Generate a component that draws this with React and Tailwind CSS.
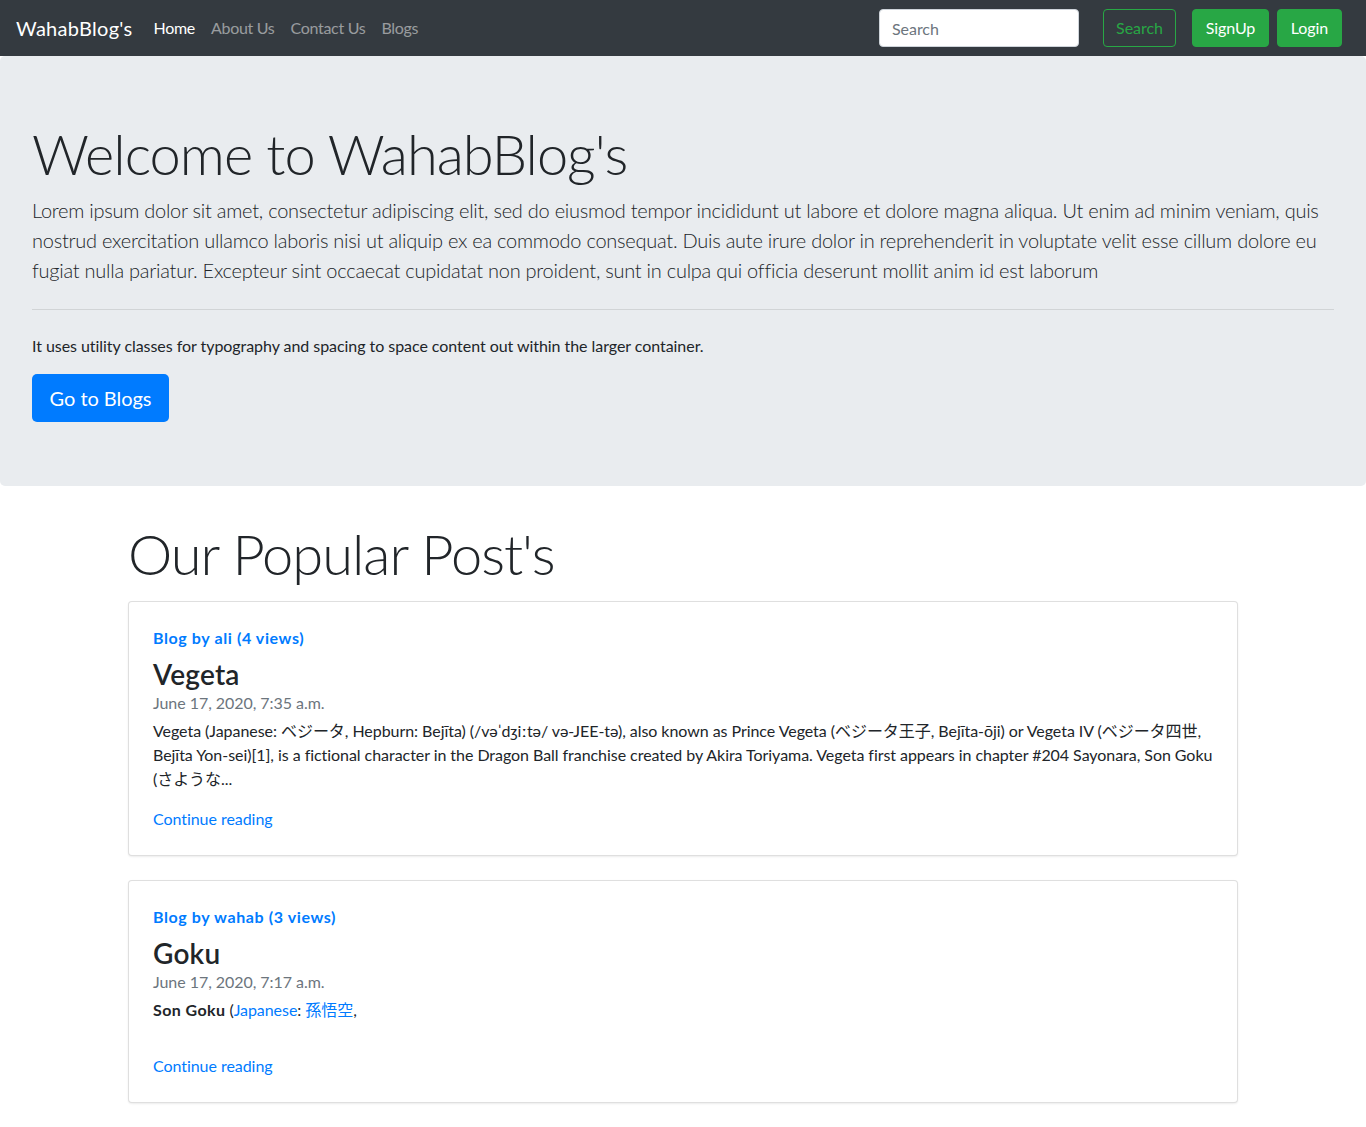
import React from "react";

function Card({ author, views, title, date, children, extra }) {
  return (
    <div className="mb-6 rounded-[4px] border border-[rgba(0,0,0,0.125)] bg-white p-6 shadow-[0_1px_2px_rgba(0,0,0,0.075)]">
      <div className="mb-2 text-[16px] font-bold leading-6 tracking-[0.6px] text-[#007bff]">
        Blog by {author} ({views} views)
      </div>
      <h3 className="text-[28px] font-semibold leading-[33px] tracking-[0.2px] text-[#212529]">{title}</h3>
      <div className="mb-1 text-[16px] leading-6 text-[#6c757d]">{date}</div>
      <div className="mb-4 text-[16px] leading-6 text-[#212529]">{children}</div>
      {extra}
      <a className="block text-[16px] leading-6 text-[#007bff]" href="#">Continue reading</a>
    </div>
  );
}

export default function App() {
  return (
    <div className="min-h-[1127px] bg-white font-['Lato','Noto_Sans_CJK_JP',sans-serif] tracking-[-0.05px] text-[#212529]">
      <nav className="flex h-14 items-center bg-[#343a40] px-4">
        <a href="#" className="mr-[13px] text-[20px] leading-[30px] tracking-[0.3px] text-white">WahabBlog's</a>
        <ul className="flex text-[16px] leading-6 tracking-[-0.3px]">
          <li><a href="#" className="block px-2 py-2 text-white">Home</a></li>
          <li><a href="#" className="block px-2 py-2 text-[rgba(255,255,255,0.5)]">About Us</a></li>
          <li><a href="#" className="block px-2 py-2 text-[rgba(255,255,255,0.5)]">Contact Us</a></li>
          <li><a href="#" className="block px-2 py-2 text-[rgba(255,255,255,0.5)]">Blogs</a></li>
        </ul>
        <div className="ml-auto flex items-center">
          <input
            className="h-[38px] w-[200px] rounded-[4px] border border-[#ced4da] bg-white px-3 text-[16px] text-[#495057] outline-none placeholder:text-[#6c757d]"
            placeholder="Search"
          />
          <button className="ml-6 h-[38px] w-[73px] rounded-[4px] border border-[#28a745] text-[16px] text-[#28a745]">Search</button>
          <button className="ml-4 h-[38px] w-[77px] rounded-[4px] border border-[#28a745] bg-[#28a745] text-[16px] text-white">SignUp</button>
          <button className="ml-2 mr-2 h-[38px] w-[65px] rounded-[4px] border border-[#28a745] bg-[#28a745] text-[16px] text-white">Login</button>
        </div>
      </nav>

      <div className="mb-8 rounded-[5px] bg-[#e9ecef] px-8 py-16">
        <h1 className="mb-2 text-[56px] font-light leading-[1.2] tracking-[-1px]">Welcome to WahabBlog's</h1>
        <p className="mb-4 text-[20px] font-light leading-[30px] tracking-[-0.25px]">
          Lorem ipsum dolor sit amet, consectetur adipiscing elit, sed do eiusmod tempor incididunt ut labore et dolore magna aliqua. Ut enim ad minim veniam, quis nostrud exercitation ullamco laboris nisi ut aliquip ex ea commodo consequat. Duis aute irure dolor in reprehenderit in voluptate velit esse cillum dolore eu fugiat nulla pariatur. Excepteur sint occaecat cupidatat non proident, sunt in culpa qui officia deserunt mollit anim id est laborum
        </p>
        <hr className="my-6 border-0 border-t border-[rgba(0,0,0,0.1)]" />
        <p className="mb-4 text-[16px] leading-6">It uses utility classes for typography and spacing to space content out within the larger container.</p>
        <a href="#" className="inline-block h-12 w-[137px] rounded-[5px] bg-[#007bff] text-center text-[20px] leading-[48px] text-white">Go to Blogs</a>
      </div>

      <div className="mx-auto w-[1140px] px-[15px] pt-[2px]">
        <h1 className="mb-[14px] text-[56px] font-light leading-[1.2] tracking-[-1px]">Our Popular Post's</h1>
        <Card author="ali" views="4" title="Vegeta" date="June 17, 2020, 7:35 a.m.">
          Vegeta (Japanese: ベジータ, Hepburn: Bejīta) (/vəˈdʒiːtə/ və-JEE-tə), also known as Prince Vegeta (ベジータ王子, Bejīta-ōji) or Vegeta IV (ベジータ四世, Bejīta Yon-sei)[1], is a fictional character in the Dragon Ball franchise created by Akira Toriyama. Vegeta first appears in chapter #204 Sayonara, Son Goku (さような...
        </Card>
        <Card
          author="wahab"
          views="3"
          title="Goku"
          date="June 17, 2020, 7:17 a.m."
          extra={<div className="h-4" />}
        >
          <b className="font-bold tracking-[0.4px]">Son Goku</b> (<a href="#" className="text-[#007bff]">Japanese</a>: <a href="#" className="text-[#007bff]">孫悟空</a>,
        </Card>
      </div>
    </div>
  );
}
